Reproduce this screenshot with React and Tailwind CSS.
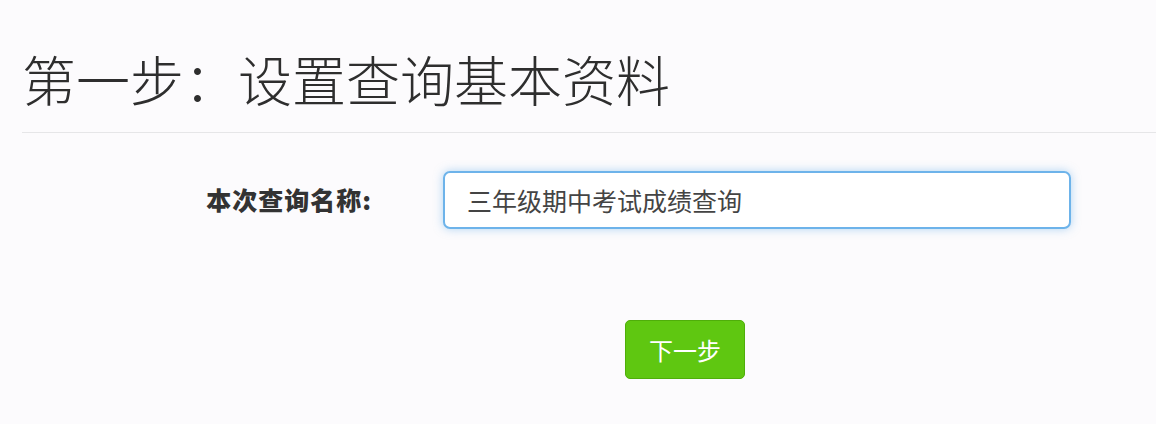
import React from "react";

function App() {
  return (
    <div
      className="w-[1156px] h-[424px] bg-[#fcfbfd] overflow-hidden"
      style={{ fontFamily: '"Noto Sans CJK SC", "Noto Sans", sans-serif' }}
    >
      <div className="pl-[22px] pt-[44px]">
        <h1 className="text-[54px] leading-[70px] font-light text-[#2e2e2e]">
          第一步：设置查询基本资料
        </h1>
        <div className="mt-[18px] h-px bg-[#e6e6e8]" />
      </div>

      <div className="flex items-center mt-[38px]">
        <label className="w-[372px] text-right text-[25px] font-black text-[#333] tracking-[1px]">
          本次查询名称:
        </label>
        <input
          type="text"
          defaultValue="三年级期中考试成绩查询"
          className="ml-[71px] w-[628px] h-[58px] px-[22px] text-[25px] text-[#444] bg-white border-2 border-[#6db3ea] rounded-[7px] shadow-[0_0_10px_rgba(102,175,233,0.5)] outline-none"
          style={{ fontFamily: '"Noto Sans CJK SC", "Noto Sans", sans-serif' }}
        />
      </div>

      <div className="pl-[625px] mt-[91px]">
        <button className="w-[120px] h-[59px] bg-[#5fc711] border border-[#4fae0a] rounded-[5px] text-white text-[24px]">
          下一步
        </button>
      </div>
    </div>
  );
}

export default App;
